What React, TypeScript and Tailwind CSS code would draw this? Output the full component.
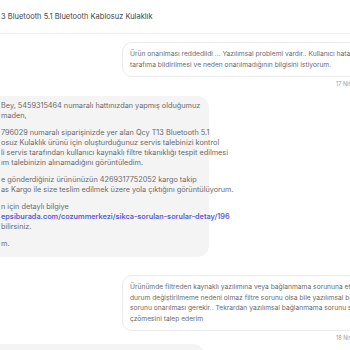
const leftParas: { text: string; link?: boolean }[][] = [
  [
    { text: 'Bey, 5459315464 numaralı hattınızdan yapmış olduğumuz' },
    { text: 'maden,' },
  ],
  [
    { text: '796029 numaralı siparişinizde yer alan Qcy T13 Bluetooth 5.1' },
    { text: 'osuz Kulaklık ürünü için oluşturduğunuz servis talebinizi kontrol' },
    { text: 'li servis tarafından kullanıcı kaynaklı filtre tıkanıklığı tespit edilmesi' },
    { text: 'ım talebinizin alınamadığını görüntüledim.' },
  ],
  [
    { text: 'e gönderdiğiniz ürününüzün 4269317752052 kargo takip' },
    { text: 'as Kargo ile size teslim edilmek üzere yola çıktığını görüntülüyorum.' },
  ],
  [
    { text: 'n için detaylı bilgiye' },
    { text: 'epsiburada.com/cozummerkezi/sikca-sorulan-sorular-detay/196', link: true },
    { text: 'bilirsiniz.' },
  ],
  [{ text: 'm.' }],
];

function OutgoingBubble({ lines, time }: { lines: string[]; time: string }) {
  return (
    <div className="flex flex-col">
      <div className="ml-[122px] w-[300px] shrink-0 rounded-[10px] border border-[#ebebeb] bg-white px-[7px] pt-[6px] pb-[6px]">
        {lines.map((l, i) => (
          <div key={i} className="whitespace-nowrap text-[6.7px] leading-[10.5px] text-[#6a6a6a]">
            {l}
          </div>
        ))}
      </div>
      <div className="mt-[3px] pl-[336px] whitespace-nowrap text-[5.5px] leading-[8px] text-[#9a9a9a]">{time}</div>
    </div>
  );
}

export default function App() {
  return (
    <div className="h-[350px] w-[350px] overflow-hidden bg-white font-['Inter',sans-serif]">
      <div className="flex h-[34px] items-center border-b border-[#eeeeee] pl-[1px]">
        <span className="whitespace-nowrap text-[7.5px] text-[#444444]">3 Bluetooth 5.1 Bluetooth Kablosuz Kulaklık</span>
      </div>

      <div className="mt-[8px]">
        <OutgoingBubble
          time="17 Nis"
          lines={[
            'Ürün onarılması reddedildi ... Yazılımsal problemi vardır.. Kullanıcı hatamın yazılımsal',
            'tarafıma bildirilmesi ve neden onarılmadığının bilgisini istiyorum.',
          ]}
        />
      </div>

      <div className="mt-[8px] w-[209px] rounded-r-[12px] bg-[#f4f4f4] pl-[1px] pt-[5px] pb-[8px]">
        {leftParas.map((p, i) => (
          <div key={i} className={i > 0 ? 'mt-[7px]' : ''}>
            {p.map((l, j) => (
              <div
                key={j}
                className={
                  l.link
                    ? 'whitespace-nowrap text-[7.3px] font-semibold leading-[10px] text-[#5b5bd6]'
                    : 'whitespace-nowrap text-[7.3px] leading-[10px] text-[#6a6a6a]'
                }
              >
                {l.text}
              </div>
            ))}
          </div>
        ))}
      </div>

      <div className="mt-[18px]">
        <OutgoingBubble
          time="18 Nis"
          lines={[
            'Ürünümde filtreden kaynaklı yazılımına veya bağlanmama sorununa etki edecek bir',
            'durum değiştirilmeme nedeni olmaz filtre sorunu olsa bile yazılımsal bağlanmama',
            'sorunu onarılması gerekir.. Tekrardan yazılımsal bağlanmama sorunu servisin',
            'çzömesini talep ederim',
          ]}
        />
      </div>

      <div className="mt-[2px] h-[20px] w-[205px] rounded-tr-[12px] bg-[#f4f4f4]" />
    </div>
  );
}
